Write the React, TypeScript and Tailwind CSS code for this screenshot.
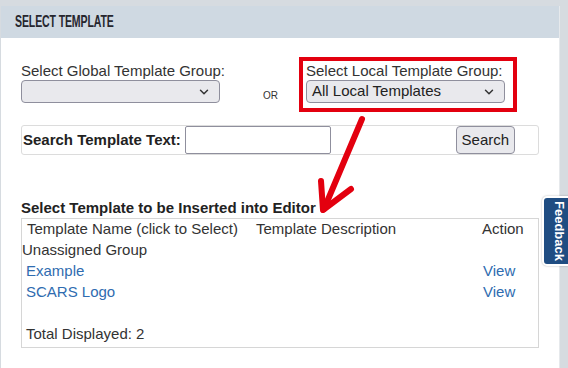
import React from 'react';
import { ChevronDown } from 'lucide-react';

const rows = [
  { name: 'Example', action: 'View' },
  { name: 'SCARS Logo', action: 'View' },
];

const FakeSelect = ({ value = '' }: { value?: string }) => (
  <div className="flex h-[23px] w-[199px] items-center justify-between rounded-[4px] border border-[#8f8f9d] bg-[#e9e9ed] pl-[5px] pr-[8px] text-[15px] text-[#222]">
    <span>{value}</span>
    <ChevronDown className="h-[14px] w-[14px] text-[#333]" strokeWidth={2.5} />
  </div>
);

const App = () => {
  return (
    <div
      className="relative h-[368px] overflow-hidden bg-[#d6dbe0] pt-[6px] text-[#333]"
      style={{ fontFamily: '"Liberation Sans", Arial, sans-serif' }}
    >
      {/* Panel */}
      <div className="ml-[1px] h-[400px] w-[559px] border-r border-[#e6e9ec] bg-white">
        <div className="flex h-[32px] items-center bg-[#cfd9e2] px-[14px]">
          <h2
            className="origin-left scale-x-[0.62] text-[17px] font-bold tracking-[-0.2px] text-[#26262e]"
            style={{ fontFamily: '"Liberation Sans", "DejaVu Sans Condensed", sans-serif' }}
          >
            SELECT TEMPLATE
          </h2>
        </div>

        <div className="px-[20px] pt-[19px]">
          {/* Template group pickers */}
          <div className="flex items-start">
            <div className="pt-[4px]">
              <div className="text-[15px] leading-[19px]">Select Global Template Group:</div>
              <FakeSelect />
            </div>
            <div className="ml-[38px] mt-[31px] text-[10px]">OR</div>
            <div className="ml-[21px] border-[4px] border-[#e3000f] pb-[5px] pl-[3px] pr-[8px]">
              <div className="text-[15px] leading-[19px]">Select Local Template Group:</div>
              <FakeSelect value="All Local Templates" />
            </div>
          </div>

          {/* Search */}
          <div className="mt-[13px] flex h-[30px] w-[518px] items-center rounded-[3px] border border-[#dcdcdc] pl-[1px]">
            <span className="text-[15px] font-bold text-[#222]">Search Template Text:</span>
            <div className="ml-[4px] h-[28px] w-[146px] rounded-[2px] border border-[#8f8f9d]" />
            <div className="ml-[125px] flex h-[28px] w-[59px] items-center justify-center rounded-[4px] border border-[#8f8f9d] bg-[#e9e9ed] text-[15px] text-[#222]">
              Search
            </div>
          </div>

          {/* Template list */}
          <div className="mt-[43px] text-[15px] font-bold leading-[20px] text-[#222]">
            Select Template to be Inserted into Editor
          </div>
          <div className="w-[518px] border border-[#d6d6d6] pb-[2px] text-[15px]">
            <div className="flex h-[21px] items-center">
              <span className="ml-[5px] w-[229px]">Template Name (click to Select)</span>
              <span className="w-[226px]">Template Description</span>
              <span>Action</span>
            </div>
            <div className="flex h-[21px] items-center">Unassigned Group</div>
            {rows.map((row) => (
              <div key={row.name} className="flex h-[21px] items-center text-[#2f6cb0]">
                <span className="ml-[4px] w-[457px]">{row.name}</span>
                <span>{row.action}</span>
              </div>
            ))}
            <div className="h-[21px]" />
            <div className="flex h-[21px] items-center pl-[4px]">Total Displayed: 2</div>
          </div>
        </div>
      </div>

      {/* Annotation arrow */}
      <svg className="pointer-events-none absolute left-0 top-0" width="568" height="368">
        <g stroke="#e3000f" strokeWidth="6" strokeLinecap="round" strokeLinejoin="round" fill="none">
          <line x1="362" y1="119" x2="324" y2="209" />
          <polyline points="321,181 323,210 351,189" />
        </g>
      </svg>

      {/* Feedback tab */}
      <div className="absolute left-[542px] top-[196px] flex h-[70px] w-[34px] items-center justify-start rounded-l-[5px] border-2 border-white bg-[#1f4d82] pl-[5px] shadow-[0_0_2px_rgba(0,0,0,0.3)]">
        <span
          className="text-[13px] font-bold text-white"
          style={{ writingMode: 'vertical-rl' }}
        >
          Feedback
        </span>
      </div>
    </div>
  );
};

export default App;
